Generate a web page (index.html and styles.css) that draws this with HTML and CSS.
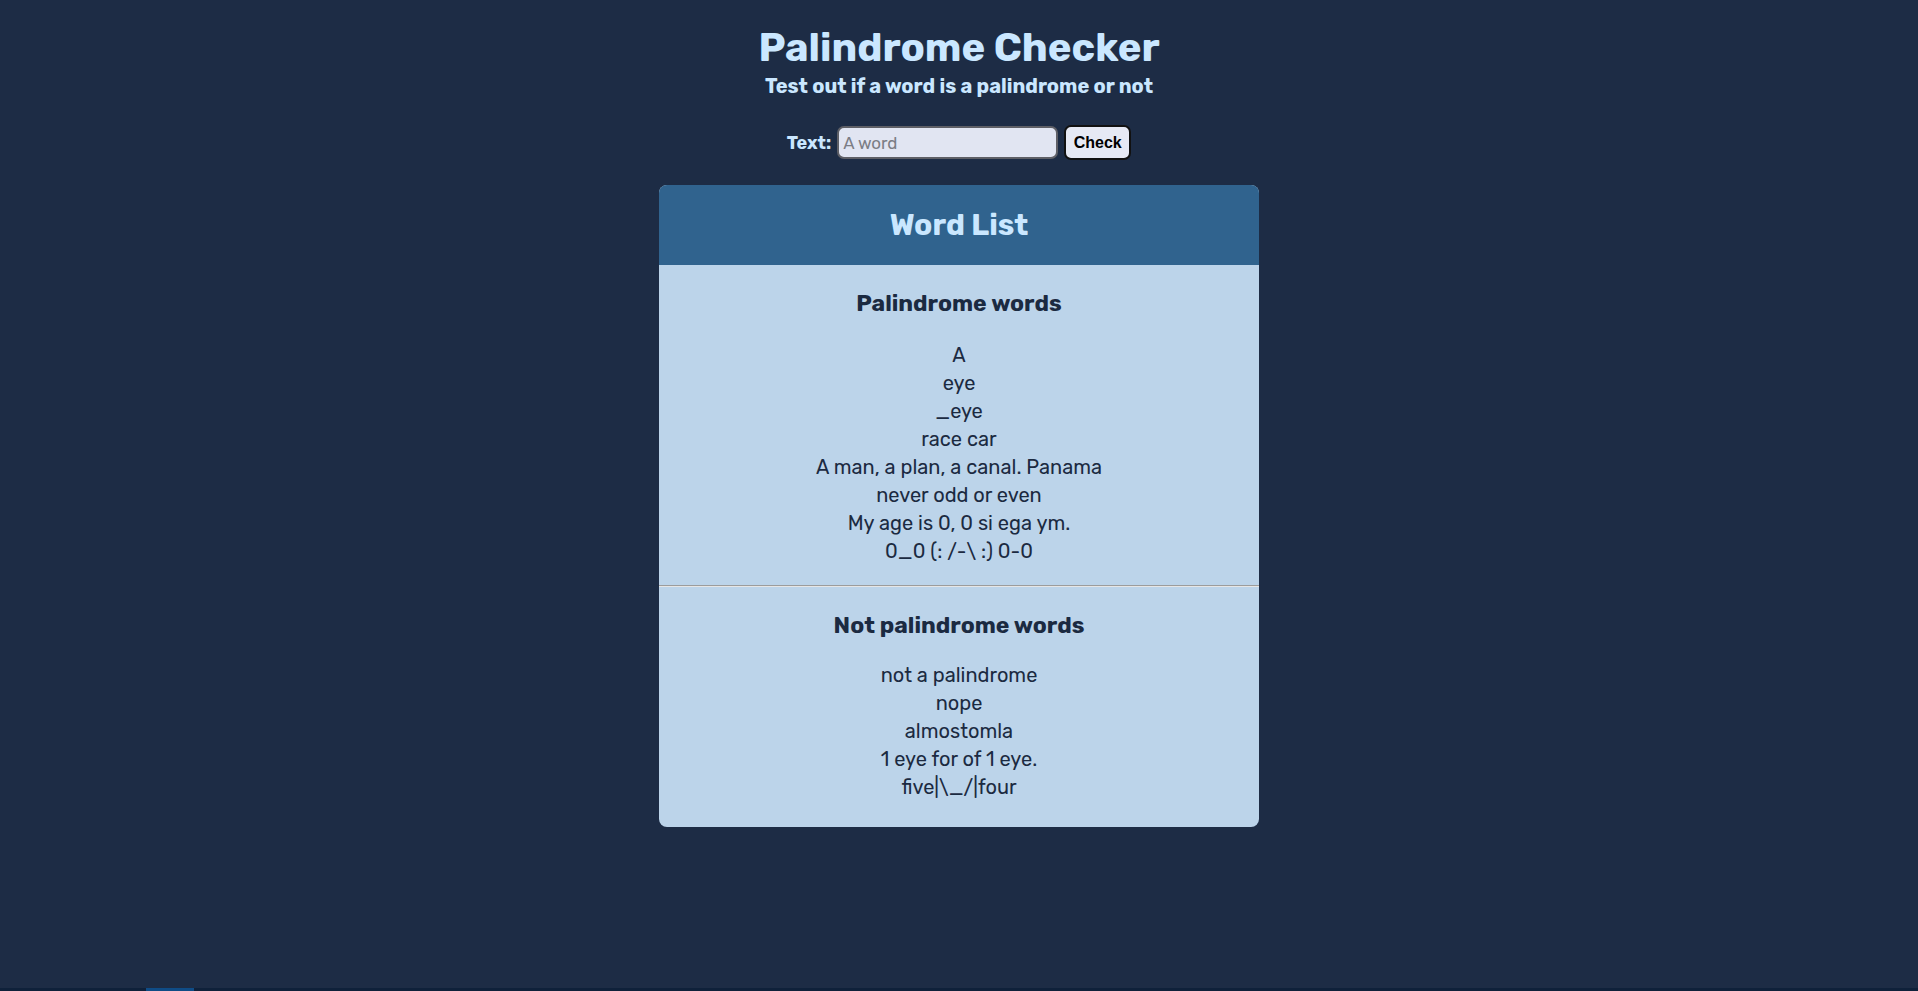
FILE: index.html
```html
<!DOCTYPE html>
<html lang="en">
<head>
<meta charset="utf-8">
<title>Palindrome Checker</title>
<link rel="stylesheet" href="styles.css">
</head>
<body>
  <header class="top">
    <h1 class="title">Palindrome Checker</h1>
    <p class="subtitle">Test out if a word is a palindrome or not</p>
  </header>
  <form class="check-form">
    <label class="label" for="word">Text:</label>
    <input class="word-input" id="word" type="text" placeholder="A word">
    <button class="check-btn" type="button">Check</button>
  </form>
  <section class="card">
    <div class="card-head">Word List</div>
    <div class="card-section">
      <h2 class="section-title">Palindrome words</h2>
      <ul class="words">
        <li>A</li>
        <li>eye</li>
        <li>_eye</li>
        <li>race car</li>
        <li>A man, a plan, a canal. Panama</li>
        <li>never odd or even</li>
        <li>My age is 0, 0 si ega ym.</li>
        <li>0_0 (: /-\ :) 0-0</li>
      </ul>
    </div>
    <hr class="divider">
    <div class="card-section last">
      <h2 class="section-title">Not palindrome words</h2>
      <ul class="words">
        <li>not a palindrome</li>
        <li>nope</li>
        <li>almostomla</li>
        <li>1 eye for of 1 eye.</li>
        <li>five|\_/|four</li>
      </ul>
    </div>
  </section>
  <div class="bottom-bar"><span class="bottom-thumb"></span></div>
</body>
</html>
```

FILE: styles.css
```css
* { box-sizing: border-box; }

html, body {
  margin: 0;
  padding: 0;
}

body {
  background: #1d2c45;
  font-family: "Rubik", "Inter", "Noto Sans", sans-serif;
  min-height: 991px;
  display: flex;
  flex-direction: column;
  align-items: center;
}

.top {
  padding-top: 24px;
  text-align: center;
}

.title {
  margin: 0;
  font-size: 40px;
  line-height: 48px;
  font-weight: 700;
  color: #cae7ff;
}

.subtitle {
  margin: 2px 0 0;
  font-size: 20px;
  line-height: 24px;
  font-weight: 700;
  color: #cae7ff;
}

.check-form {
  margin-top: 27px;
  display: flex;
  align-items: center;
  height: 35px;
}

.label {
  font-size: 18px;
  font-weight: 700;
  color: #cae7ff;
  margin-right: 6px;
}

.word-input {
  width: 221px;
  height: 33px;
  border: 2px solid #5e5f66;
  border-radius: 7px;
  background: #e1e5f2;
  font-family: "Rubik", "Inter", sans-serif;
  font-size: 17px;
  padding: 0 4px;
  color: #222;
}

.word-input::placeholder {
  color: #7b7d85;
}

.check-btn {
  margin-left: 6px;
  width: 67px;
  height: 35px;
  border: 2px solid #111;
  border-radius: 7px;
  background: #e6e9f4;
  font-family: "Liberation Sans", Arial, sans-serif;
  font-size: 16px;
  font-weight: 700;
  color: #000;
  padding: 0;
}

.card {
  margin-top: 25px;
  width: 600px;
  background: #bcd4ea;
  border-radius: 8px;
  overflow: hidden;
  color: #1b2a41;
  text-align: center;
}

.card-head {
  height: 80px;
  background: #30638e;
  color: #cae7ff;
  font-size: 30px;
  font-weight: 700;
  display: flex;
  align-items: center;
  justify-content: center;
}

.card-section {
  padding: 24px 0 20px;
}

.card-section.last {
  padding: 24px 0 26px;
}

.section-title {
  margin: 0 0 24px;
  font-size: 23px;
  line-height: 28px;
  font-weight: 700;
}

.card-section.last .section-title {
  margin-bottom: 22px;
}

.words {
  list-style: none;
  margin: 0;
  padding: 0;
  font-size: 20px;
  line-height: 28px;
}

.divider {
  margin: 0;
  height: 0;
  border: 0;
  border-top: 1px solid #9c9c9c;
  border-bottom: 1px solid #e6e6e6;
}

.bottom-bar {
  position: fixed;
  left: 0;
  right: 0;
  bottom: 0;
  height: 3px;
  background: #0f213a;
}

.bottom-thumb {
  position: absolute;
  left: 146px;
  width: 48px;
  top: 0;
  bottom: 0;
  background: #0f4c86;
}
```
